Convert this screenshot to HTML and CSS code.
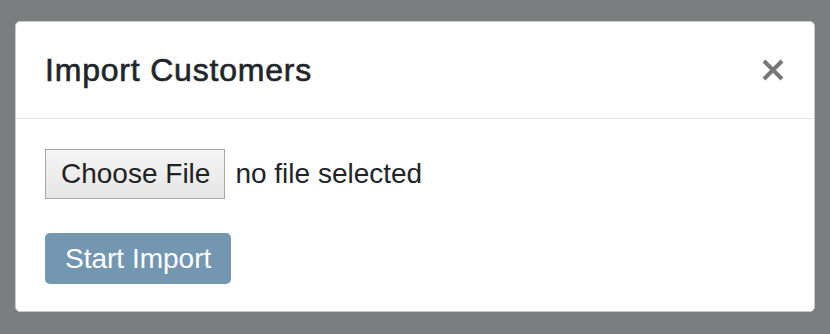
FILE: index.html
```html
<!DOCTYPE html>
<html lang="en">

<head>
    <meta charset="UTF-8">
    <title>Import Customers</title>
    <link rel="stylesheet" href="styles.css">
</head>

<body>
    <div class="modal">
        <div class="modal-header">
            <h4 class="modal-title">Import Customers</h4>
            <span class="close">
                <svg width="22" height="22" viewBox="0 0 22 22">
                    <path d="M2 2 L20 20 M20 2 L2 20" stroke="#777" stroke-width="4" />
                </svg>
            </span>
        </div>
        <div class="modal-body">
            <div class="file-row">
                <label class="file-btn">Choose File</label>
                <span class="file-name">no file selected</span>
            </div>
            <button class="button">Start Import</button>
        </div>
    </div>
</body>

</html>
```

FILE: styles.css
```css
body {
    font-family: "Liberation Sans", Arial, sans-serif;
    background-color: #7c7d7f;
    margin: 0;
    padding: 21px 15px;
}

.modal {
    width: 798px;
    background: #fff;
    border: 1px solid #c9c9c9;
    border-radius: 5px;
}

.modal-header {
    display: flex;
    align-items: center;
    justify-content: space-between;
    padding: 24px 30px 24px 29px;
    border-bottom: 1px solid #e6e6e8;
}

.modal-title {
    margin: 0;
    font-size: 32px;
    line-height: 48px;
    font-weight: normal;
    letter-spacing: 0.8px;
    color: #212529;
    -webkit-text-stroke: 0.6px #212529;
}

.close {
    display: flex;
    cursor: pointer;
}

.modal-body {
    padding: 30px 29px 27px;
}

.file-row {
    display: flex;
    align-items: center;
    gap: 10px;
    margin-bottom: 34px;
    font-size: 28px;
    color: #212529;
}

.file-btn {
    display: flex;
    align-items: center;
    height: 48px;
    padding: 0 14px 0 15px;
    border: 1px solid #a8a8a8;
    background: linear-gradient(#f5f5f5, #e5e5e5);
    color: #222;
}

.button {
    font-family: inherit;
    font-size: 28px;
    height: 51px;
    padding: 0 20px;
    background-color: #7397b1;
    color: #fff;
    border: none;
    border-radius: 5px;
    cursor: pointer;
}
```
